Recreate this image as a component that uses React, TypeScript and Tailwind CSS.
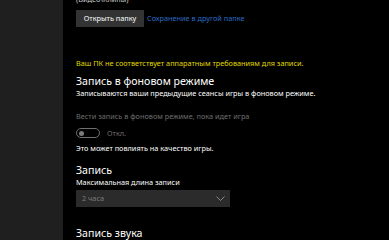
const Toggle = () => (
	<div className="flex items-center gap-[7px] h-[10px]">
		<div className="w-[24px] h-[10px] rounded-full border border-[#6f6f6f] flex items-center px-[2px]">
			<div className="w-[5px] h-[5px] rounded-full bg-[#7a7a7a]"></div>
		</div>
		<span className="text-[#6f6f6f] leading-[10px]">Откл.</span>
	</div>
);

const App = () => {
	return (
		<div
			className="flex w-[389px] h-[240px] overflow-hidden bg-black text-[7.3px] text-white whitespace-nowrap"
			style={{ fontFamily: '"Noto Sans", sans-serif' }}
		>
			<div className="w-[63px] shrink-0 bg-[#1f1f1f]"></div>
			<div className="flex flex-col items-start pl-[13px]">
				<p className="mt-[-7px] leading-[12px] text-[#cfcfcf]">(Видео\Клипы)</p>
				<div className="flex items-center gap-[3px] mt-[5px]">
					<button className="h-[17px] w-[68px] bg-[#333333] text-white leading-[17px]">Открыть папку</button>
					<a className="text-[#2b6cc4]">Сохранение в другой папке</a>
				</div>
				<p className="mt-[30px] text-[#e0d800] leading-[12px]">Ваш ПК не соответствует аппаратным требованиям для записи.</p>
				<h2 className="mt-[5px] text-[10.6px] leading-[14px]">Запись в фоновом режиме</h2>
				<p className="mt-[-1px] leading-[12px]">Записываются ваши предыдущие сеансы игры в фоновом режиме.</p>
				<p className="mt-[11px] text-[#6f6f6f] leading-[12px]">Вести запись в фоновом режиме, пока идет игра</p>
				<div className="mt-[6px]">
					<Toggle />
				</div>
				<p className="mt-[4px] leading-[12px]">Это может повлиять на качество игры.</p>
				<h2 className="mt-[9px] text-[10.6px] leading-[14px]">Запись</h2>
				<p className="mt-[-1px] leading-[12px]">Максимальная длина записи</p>
				<div className="mt-[2px] w-[154px] h-[18px] bg-[#2b2b2b] flex items-center justify-between pl-[6px] pr-[5px]">
					<span className="text-[#7a7a7a]">2 часа</span>
					<svg width="9" height="6" viewBox="0 0 9 6" fill="none">
						<path d="M0.5 0.5 L4.5 4.5 L8.5 0.5" stroke="#8a8a8a" strokeWidth="1" />
					</svg>
				</div>
				<h2 className="mt-[19px] text-[10.6px] leading-[14px]">Запись звука</h2>
			</div>
		</div>
	);
};

export default App;
